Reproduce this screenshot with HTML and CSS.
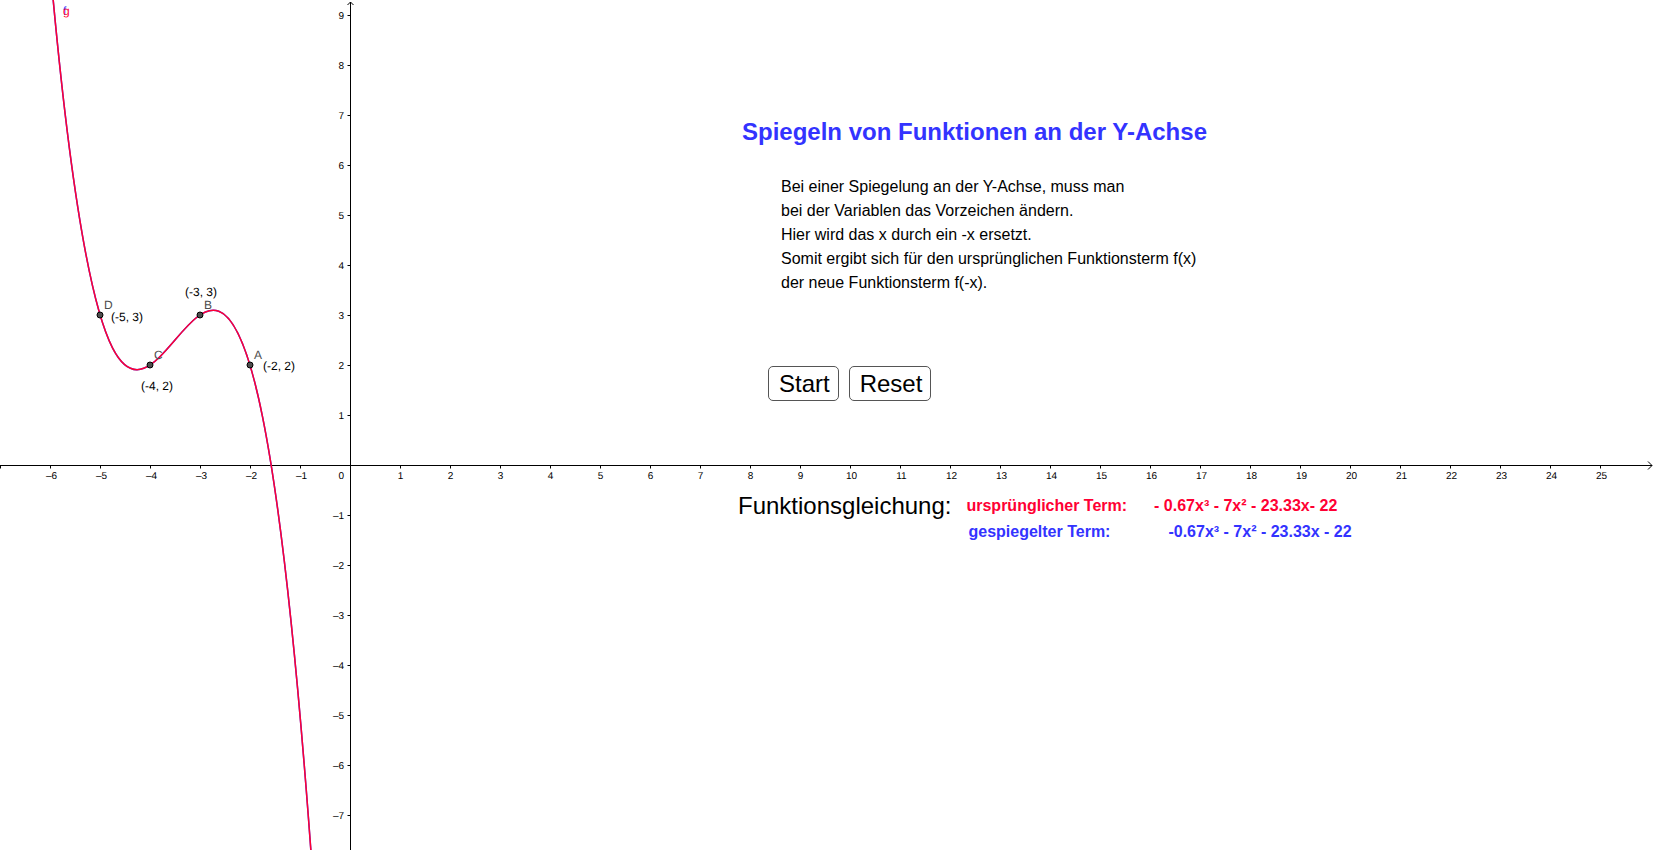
FILE: index.html
```html
<!DOCTYPE html>
<html lang="de">
<head>
<meta charset="utf-8">
<meta name="viewport" content="width=device-width, initial-scale=1">
<title>Spiegeln von Funktionen an der Y-Achse</title>
<link rel="stylesheet" href="styles.css">
</head>
<body>
<svg class="plot" role="img" aria-label="Graph der Funktionen f und g">
  <g id="axes" class="axes"></g>
  <g id="ticks" class="tick-labels"></g>
  <path class="curve curve-f" d="M50 -35C150 1098.33 250 -768.33 350 1565"/>
  <path class="curve curve-g" d="M50 -35C150 1098.33 250 -768.33 350 1565"/>
  <g class="curve-names">
    <text class="name-f" x="63" y="15">f</text>
    <text class="name-g" x="63" y="15">g</text>
  </g>
  <g class="points">
    <circle cx="250" cy="365" r="3"/>
    <circle cx="200" cy="315" r="3"/>
    <circle cx="150" cy="365" r="3"/>
    <circle cx="100" cy="315" r="3"/>
  </g>
  <g class="point-names">
    <text x="254" y="359">A</text>
    <text x="204" y="309">B</text>
    <text x="154" y="359">C</text>
    <text x="104" y="309">D</text>
  </g>
  <g class="coordinates">
    <text x="263" y="370">(-2, 2)</text>
    <text x="185" y="296">(-3, 3)</text>
    <text x="141" y="390">(-4, 2)</text>
    <text x="111" y="321">(-5, 3)</text>
  </g>
</svg>
<main class="panel">
  <h1 class="title">Spiegeln von Funktionen an der Y-Achse</h1>
  <p class="explanation">Bei einer Spiegelung an der Y-Achse, muss man<br>
    bei der Variablen das Vorzeichen ändern.<br>
    Hier wird das x durch ein -x ersetzt.<br>
    Somit ergibt sich für den ursprünglichen Funktionsterm f(x)<br>
    der neue Funktionsterm f(-x).</p>
  <div class="controls">
    <button class="button" type="button">Start</button>
    <button class="button" type="button">Reset</button>
  </div>
  <section class="equations">
    <h2 class="equations-title">Funktionsgleichung:</h2>
    <dl class="terms">
      <div class="term term-original"><dt>ursprünglicher Term:</dt><dd>- 0.67x³ - 7x² - 23.33x- 22</dd></div>
      <div class="term term-mirrored"><dt>gespiegelter Term:</dt><dd>-0.67x³ - 7x² - 23.33x - 22</dd></div>
    </dl>
  </section>
</main>
<script src="plot.js"></script>
</body>
</html>
```
FILE: styles.css
```css
* {
  box-sizing: border-box;
}

body {
  margin: 0;
  min-height: 100vh;
  background: #fff;
  color: #000;
  font-family: "Liberation Sans", Arial, sans-serif;
  overflow: hidden;
}

.plot {
  position: absolute;
  inset: 0;
  width: 100%;
  height: 100%;
  font-size: 12px;
  text-rendering: geometricPrecision;
}

.axes {
  fill: none;
  stroke: #000;
  stroke-width: 1;
}

.tick-labels {
  font-size: 10px;
  fill: #000;
}

.curve {
  fill: none;
  stroke-width: 1.5;
}

.curve-f {
  stroke: #33f;
}

.curve-g {
  stroke: #ff0033;
}

.name-f {
  fill: #33f;
}

.name-g {
  fill: #ff0033;
}

.points {
  fill: #4d4d4d;
  stroke: #000;
}

.point-names {
  fill: #4d4d4d;
}

.panel {
  position: relative;
  padding: 116px 0 0 738px;
}

.title {
  margin: 0 0 0 4px;
  font-size: 24px;
  line-height: 32px;
  color: #33f;
}

.explanation {
  margin: 27px 0 0 43px;
  font-size: 16px;
  line-height: 24px;
}

.controls {
  display: flex;
  gap: 10px;
  margin: 71px 0 0 30px;
}

.button {
  height: 35px;
  padding: 0 8px 0 10px;
  border: 1px solid #555;
  border-radius: 5px;
  background: #fff;
  color: #000;
  font-family: inherit;
  font-size: 24px;
  line-height: 32px;
}

.equations {
  display: flex;
  align-items: flex-start;
  gap: 15px;
  margin-top: 89px;
}

.equations-title {
  margin: 0;
  font-size: 24px;
  font-weight: 400;
  line-height: 32px;
}

.terms {
  margin: 3px 0 0;
  font-size: 16px;
  font-weight: 700;
  line-height: 26px;
}

.term {
  display: flex;
}

.term dd {
  margin: 0;
}

.term-original {
  gap: 27px;
  color: #ff0033;
}

.term-mirrored {
  gap: 58px;
  padding-left: 2px;
  color: #33f;
}
```
FILE: plot.js
```js
const NS = "http://www.w3.org/2000/svg";
const UNIT = 50;
const ORIGIN = { x: 350, y: 465 };
const axes = document.getElementById("axes");
const ticks = document.getElementById("ticks");

function label(x, y, value, anchor) {
  const node = document.createElementNS(NS, "text");
  node.setAttribute("x", x);
  node.setAttribute("y", y);
  node.setAttribute("text-anchor", anchor);
  node.textContent = value < 0 ? "–" + -value : value;
  ticks.appendChild(node);
}

function draw() {
  const width = window.innerWidth;
  const height = window.innerHeight;
  const ax = ORIGIN.x + 0.5;
  const ay = ORIGIN.y + 0.5;
  const tip = width - 3;
  ticks.replaceChildren();
  let d = `M0 ${ay}H${tip}M${tip - 4} ${ay - 4}L${tip} ${ay}L${tip - 4} ${ay + 4}`;
  d += `M${ax} ${height}V2M${ax - 3} 5L${ax} 2L${ax + 3} 5`;

  for (let i = -Math.floor(ORIGIN.x / UNIT); ax + i * UNIT < width - 30; i++) {
    const x = ax + i * UNIT;
    if (i !== 0) {
      d += `M${x} ${ay}v3`;
      if (x > 10) label(i < 10 && i > 0 ? x : x + 1, 479, i, "middle");
    }
  }
  label(344, 479, 0, "end");

  for (let i = -Math.floor((height - ORIGIN.y) / UNIT); ay - i * UNIT > 10; i++) {
    if (i !== 0) {
      const y = ay - i * UNIT;
      d += `M${ax} ${y}h-3`;
      label(344, y + 3, i, "end");
    }
  }

  const path = document.createElementNS(NS, "path");
  path.setAttribute("d", d);
  axes.replaceChildren(path);
}

draw();
window.addEventListener("resize", draw);
```
